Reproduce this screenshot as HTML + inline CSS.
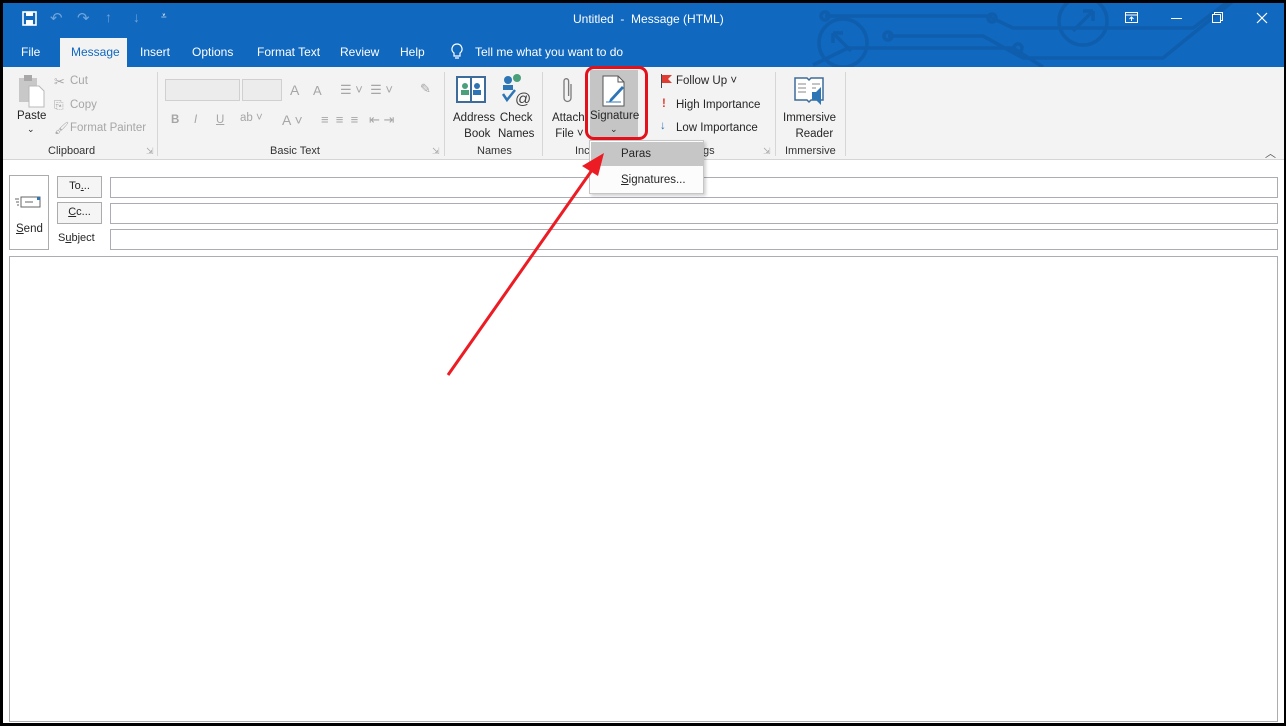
<!DOCTYPE html>
<html><head><meta charset="utf-8"><style>
*{margin:0;padding:0;box-sizing:border-box}
body{width:1286px;height:726px;background:#000;position:relative;overflow:hidden;font-family:"Liberation Sans",sans-serif;font-size:11.5px;color:#262626}
.a{position:absolute}
.t{position:absolute;white-space:nowrap}
.w{color:#fff}
.g{color:#a6a6a6}
.lbl{position:absolute;top:145px;font-size:11px;color:#333;white-space:nowrap}
.sep{position:absolute;top:72px;width:1px;height:84px;background:#d6d6d6}
.box{position:absolute;border:1px solid #abadb3;background:#fff}
.btn{position:absolute;border:1px solid #acacac;background:#f5f5f5;text-align:center;font-size:11px;line-height:19px}
.tab{font-size:12px}
</style></head><body>
<div class="a" style="left:3px;top:3px;width:1281px;height:720px;background:#fff"></div>
<div class="a" style="left:3px;top:3px;width:1281px;height:64px;background:#1068bf;overflow:hidden">
<svg width="1281" height="64" class="a" style="left:0;top:0">
<g stroke="#0f5ead" stroke-width="3.5" fill="none">
<circle cx="840" cy="40" r="24"/><path d="M830 30l18 18M830 30v10M830 30h10"/>
<circle cx="1080" cy="18" r="24"/><path d="M1070 28l20-20M1090 8h-10M1090 8v10"/>
<path d="M822 13H985L1010 25H1190L1230 -5"/>
<path d="M885 33H980L1020 55H1160L1240 -10"/>
<path d="M810 62L845 45H1010L1040 64"/>
<circle cx="822" cy="13" r="4"/><circle cx="989" cy="15" r="4"/><circle cx="885" cy="33" r="4"/><circle cx="1015" cy="45" r="4"/>
</g></svg>
</div>
<svg class="a" style="left:22px;top:11px" width="16" height="16"><rect x="1" y="1" width="13" height="13" fill="none" stroke="#fff" stroke-width="1.6"/><rect x="4" y="1" width="7" height="4" fill="#fff"/><rect x="4" y="9" width="7" height="5" fill="#fff"/></svg>
<div class="t" style="left:50px;top:9px;color:#6fa4dc;font-size:15px">↶</div>
<div class="t" style="left:77px;top:9px;color:#6fa4dc;font-size:15px">↷</div>
<div class="t" style="left:105px;top:9px;color:#6fa4dc;font-size:14px">↑</div>
<div class="t" style="left:133px;top:9px;color:#6fa4dc;font-size:14px">↓</div>
<div class="t w" style="left:161px;top:11px;font-size:10px">⩡</div>
<div class="t w" style="left:573px;top:12px;font-size:12px">Untitled &nbsp;-&nbsp; Message (HTML)</div>
<svg class="a" style="left:1125px;top:12px" width="14" height="12"><rect x="0.5" y="0.5" width="12" height="10" fill="none" stroke="#fff"/><path d="M0 3h13M6.5 9V5M4.5 7l2-2 2 2" stroke="#fff" fill="none"/></svg>
<div class="a" style="left:1171px;top:18px;width:11px;height:1px;background:#fff"></div>
<svg class="a" style="left:1212px;top:12px" width="12" height="12"><rect x="0.5" y="2.5" width="8" height="8" fill="none" stroke="#fff"/><path d="M2.5 2.5V0.5h8v8h-2" fill="none" stroke="#fff"/></svg>
<svg class="a" style="left:1256px;top:12px" width="12" height="12"><path d="M1 1l10 10M11 1L1 11" stroke="#fff" stroke-width="1.2"/></svg>
<div class="t w tab" style="left:21px;top:45px">File</div>
<div class="a" style="left:60px;top:38px;width:67px;height:30px;background:#f3f3f3"></div>
<div class="t tab" style="left:71px;top:45px;color:#1068bf">Message</div>
<div class="t w tab" style="left:140px;top:45px">Insert</div>
<div class="t w tab" style="left:192px;top:45px">Options</div>
<div class="t w tab" style="left:257px;top:45px">Format Text</div>
<div class="t w tab" style="left:340px;top:45px">Review</div>
<div class="t w tab" style="left:400px;top:45px">Help</div>
<svg class="a" style="left:451px;top:43px" width="12" height="17"><path d="M6 1a5 5 0 0 0-3 9v3h6v-3a5 5 0 0 0-3-9zM4 15h4" fill="none" stroke="#fff" stroke-width="1.2"/></svg>
<div class="t w tab" style="left:475px;top:45px">Tell me what you want to do</div>
<div class="a" style="left:3px;top:67px;width:1281px;height:93px;background:#f3f3f3;border-bottom:1px solid #d5d5d5"></div>
<svg class="a" style="left:17px;top:74px" width="30" height="34"><rect x="2" y="4" width="18" height="24" fill="#c8c8c8"/><rect x="7" y="1" width="8" height="6" fill="#a8a8a8"/><path d="M12 12h10l5 5v16H12z" fill="#fff" stroke="#b8b8b8"/></svg>
<div class="t" style="left:17px;top:110px">Paste</div>
<div class="t" style="left:27px;top:124px;font-size:9px">⌄</div>
<div class="t g" style="left:54px;top:74px;font-size:13px">✂</div><div class="t g" style="left:70px;top:75px">Cut</div>
<div class="t g" style="left:54px;top:98px;font-size:12px">⎘</div><div class="t g" style="left:70px;top:99px">Copy</div>
<div class="t g" style="left:54px;top:121px;font-size:12px">🖌</div><div class="t g" style="left:70px;top:122px">Format Painter</div>
<div class="lbl" style="left:48px">Clipboard</div>
<div class="t g" style="left:146px;top:146px;font-size:9px">⇲</div>
<div class="sep" style="left:157px"></div>
<div class="a" style="left:165px;top:79px;width:75px;height:22px;border:1px solid #d0d0d0;background:#ececec"></div>
<div class="a" style="left:242px;top:79px;width:40px;height:22px;border:1px solid #d0d0d0;background:#ececec"></div>
<div class="t g" style="left:290px;top:82px;font-size:14px">A</div><div class="t g" style="left:313px;top:83px;font-size:13px">A</div>
<div class="t g" style="left:340px;top:82px;font-size:13px">☰ ˅ &nbsp;☰ ˅</div>
<div class="t g" style="left:420px;top:81px;font-size:13px">✎</div>
<div class="t g" style="left:171px;top:114px;font-weight:bold">B</div>
<div class="t g" style="left:194px;top:114px;font-style:italic">I</div>
<div class="t g" style="left:216px;top:114px;text-decoration:underline">U</div>
<div class="t g" style="left:240px;top:112px">ab ˅</div>
<div class="t g" style="left:282px;top:112px;font-size:14px">A ˅</div>
<div class="t g" style="left:321px;top:112px;font-size:13px">≡ &nbsp;≡ &nbsp;≡ &nbsp;&nbsp;⇤ ⇥</div>
<div class="lbl" style="left:270px">Basic Text</div>
<div class="t g" style="left:432px;top:146px;font-size:9px">⇲</div>
<div class="sep" style="left:444px"></div>
<svg class="a" style="left:456px;top:75px" width="32" height="30"><rect x="1" y="2" width="28" height="25" fill="#fff" stroke="#3e6c9a" stroke-width="2"/><line x1="15" y1="2" x2="15" y2="27" stroke="#3e6c9a" stroke-width="2"/><circle cx="9" cy="11" r="3" fill="#4aa07a"/><rect x="5" y="15" width="8" height="5" fill="#4aa07a"/><circle cx="21" cy="11" r="3" fill="#2e75b6"/><rect x="17" y="15" width="8" height="5" fill="#2e75b6"/></svg>
<svg class="a" style="left:500px;top:74px" width="32" height="32"><circle cx="8" cy="6" r="4" fill="#2e75b6"/><circle cx="17" cy="4" r="4" fill="#4aa07a"/><rect x="3" y="11" width="10" height="5" fill="#2e75b6"/><path d="M3 20l4 6 8-10" stroke="#2e75b6" stroke-width="2.5" fill="none"/><text x="15" y="30" font-size="16" fill="#444" font-family="Liberation Sans">@</text></svg>
<div class="t" style="left:453px;top:110px;text-align:center;line-height:16px">Address<br>&nbsp;&nbsp;Book</div>
<div class="t" style="left:498px;top:110px;text-align:center;line-height:16px">Check<br>Names</div>
<div class="lbl" style="left:477px">Names</div>
<div class="sep" style="left:542px"></div>
<svg class="a" style="left:561px;top:76px" width="14" height="30"><path d="M10 8v14a3.5 3.5 0 0 1-7 0V5a2.3 2.3 0 0 1 4.6 0v15" fill="none" stroke="#7a7a7a" stroke-width="1.3"/></svg>
<div class="t" style="left:552px;top:110px;line-height:16px">Attach<br>&nbsp;File ˅</div>
<div class="lbl" style="left:575px">Inc</div>
<div class="a" style="left:590px;top:70px;width:48px;height:72px;background:#c5c5c5"></div>
<svg class="a" style="left:601px;top:75px" width="28" height="32"><path d="M2 1h15l6 6v24H2z" fill="#fff" stroke="#555"/><path d="M17 1v6h6" fill="none" stroke="#555"/><path d="M9 24l12-13 2 2-12 13-3 1z" fill="#2e75b6"/><line x1="5" y1="27" x2="20" y2="27" stroke="#2e75b6"/></svg>
<div class="t" style="left:590px;top:110px">Signature</div>
<div class="t" style="left:610px;top:124px;font-size:9px">⌄</div>
<div class="a" style="left:585px;top:66px;width:63px;height:74px;border:3px solid #e3111b;border-radius:9px"></div>
<svg class="a" style="left:660px;top:74px" width="14" height="14"><path d="M1.5 0v14" stroke="#444"/><path d="M2 1h10l-4 4 4 4H2z" fill="#e03c31"/></svg>
<div class="t" style="left:676px;top:75px">Follow Up ˅</div>
<div class="t" style="left:662px;top:98px;color:#e03c31;font-weight:bold">!</div>
<div class="t" style="left:676px;top:99px">High Importance</div>
<div class="t" style="left:660px;top:120px;color:#2e75b6;font-weight:bold">↓</div>
<div class="t" style="left:676px;top:122px">Low Importance</div>
<div class="lbl" style="left:703px">gs</div>
<div class="t g" style="left:763px;top:146px;font-size:9px">⇲</div>
<div class="sep" style="left:775px"></div>
<svg class="a" style="left:794px;top:75px" width="32" height="32"><path d="M1 3h12l2 2 2-2h12v22H17l-2 2-2-2H1z" fill="#fff" stroke="#3e6c9a" stroke-width="1.5"/><path d="M4 9h8M4 13h8M4 17h8M18 9h8M18 13h4" stroke="#888"/><path d="M18 17h4l5-5v18l-5-5h-4z" fill="#2e75b6"/></svg>
<div class="t" style="left:783px;top:110px;text-align:center;line-height:16px">Immersive<br>&nbsp;&nbsp;&nbsp;Reader</div>
<div class="lbl" style="left:785px">Immersive</div>
<div class="sep" style="left:845px"></div>
<div class="t" style="left:1265px;top:145px;font-size:11px;color:#555">︿</div>
<div class="a" style="left:9px;top:175px;width:40px;height:75px;border:1px solid #acacac;background:#fff"></div>
<svg class="a" style="left:15px;top:195px" width="28" height="14"><rect x="6" y="2" width="19" height="10" fill="#fff" stroke="#666"/><rect x="22" y="2" width="3" height="3" fill="#2e75b6"/><path d="M0 4h4M1 7h3M2 10h2M10 7h8" stroke="#666"/></svg>
<div class="t" style="left:16px;top:223px"><u>S</u>end</div>
<div class="btn" style="left:57px;top:176px;width:45px;height:22px">To<u>.</u>..</div>
<div class="btn" style="left:57px;top:202px;width:45px;height:22px"><u>C</u>c...</div>
<div class="t" style="left:58px;top:232px;font-size:11px">S<u>u</u>bject</div>
<div class="box" style="left:110px;top:177px;width:1168px;height:21px"></div>
<div class="box" style="left:110px;top:203px;width:1168px;height:21px"></div>
<div class="box" style="left:110px;top:229px;width:1168px;height:21px"></div>
<div class="box" style="left:9px;top:256px;width:1269px;height:466px"></div>
<div class="a" style="left:589px;top:140px;width:115px;height:54px;background:#fcfcfc;border:1px solid #c6c6c6;box-shadow:2px 2px 3px rgba(0,0,0,.18)"></div>
<div class="a" style="left:591px;top:142px;width:112px;height:24px;background:#c6c6c6"></div>
<div class="t" style="left:621px;top:148px">Paras</div>
<div class="t" style="left:621px;top:174px"><u>S</u>ignatures...</div>
<svg class="a" style="left:0;top:0" width="1286" height="726"><line x1="448" y1="375" x2="597" y2="163" stroke="#ec1c24" stroke-width="3"/><path d="M604 153L582 166L598 176z" fill="#ec1c24"/></svg>
</body></html>
